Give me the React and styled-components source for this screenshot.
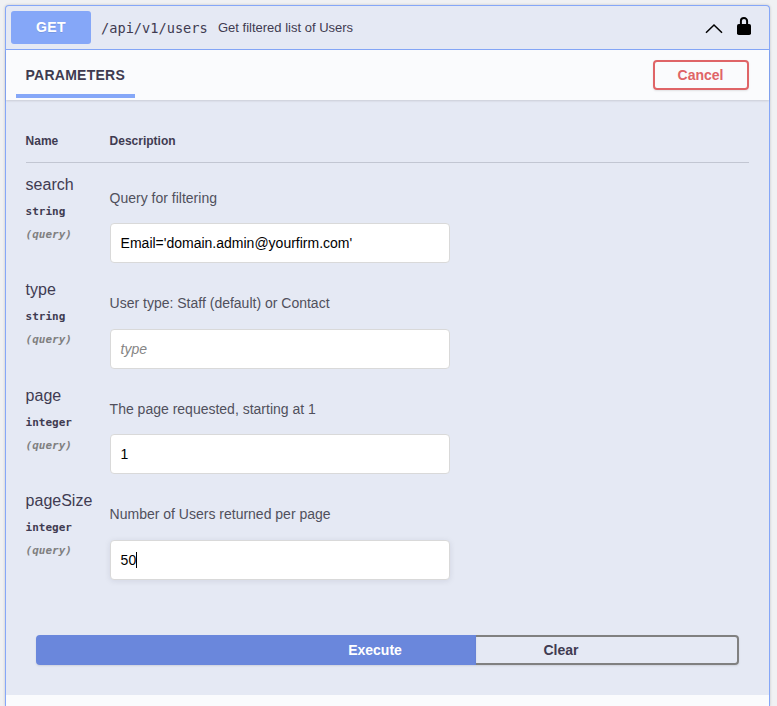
import React from "react";
import styled, { createGlobalStyle } from "styled-components";

const GlobalStyle = createGlobalStyle`
  *, *::before, *::after { box-sizing: border-box; }
  body {
    margin: 0;
    height: 706px;
    overflow: hidden;
    background: #f0f1f3;
    font-family: "Liberation Sans", Arial, sans-serif;
  }
`;

const text = "#3f3b51";
const mono = `"DejaVu Sans Mono", "Liberation Mono", monospace`;

const Operation = styled.section`
  width: 765px;
  height: 701px;
  margin: 5px 0 0 5px;
  border: 1px solid #85a7f8;
  border-bottom: 0;
  border-radius: 4px 4px 0 0;
  background: #e5e9f4;
  box-shadow: 0 0 3px rgba(0, 0, 0, 0.19);
  color: ${text};
`;

const Summary = styled.header`
  display: flex;
  align-items: center;
  height: 44px;
  padding: 0 17px 0 5px;
  border-bottom: 1px solid #85a7f8;
`;

const Method = styled.span`
  width: 80px;
  height: 33px;
  border-radius: 3px;
  background: #85a7f8;
  color: #fff;
  font-size: 14px;
  font-weight: 700;
  letter-spacing: 0.4px;
  line-height: 32px;
  text-align: center;
  text-shadow: 0 1px 0 rgba(0, 0, 0, 0.1);
`;

const Path = styled.span`
  width: 107px;
  margin-left: 10px;
  font-family: ${mono};
  font-size: 13.65px;
  line-height: 20px;
  white-space: nowrap;
`;

const SummaryText = styled.span`
  flex: 1;
  margin-left: 10px;
  font-size: 13px;
  line-height: 20px;
`;

const Chevron = styled.svg`
  width: 20px;
  height: 20px;
  margin-right: 12px;
`;

const Lock = styled.svg`
  width: 16px;
  height: 20px;
  margin-bottom: 3px;
`;

const TabBar = styled.div`
  display: flex;
  justify-content: space-between;
  align-items: center;
  height: 50px;
  padding: 0 20px 0 10px;
  background: #fafbfd;
  box-shadow: 0 1px 2px rgba(0, 0, 0, 0.12);
`;

const Tab = styled.h4`
  align-self: flex-start;
  width: 119px;
  height: 48px;
  margin: 0;
  padding-left: 9.5px;
  border-bottom: 4px solid #85a7f8;
  font-size: 14px;
  letter-spacing: 0.25px;
  line-height: 51px;
  white-space: nowrap;
`;

const Button = styled.button`
  height: 30px;
  padding: 0;
  border-style: solid;
  border-width: 2px;
  border-radius: 4px;
  background: transparent;
  box-shadow: 0 1px 2px rgba(0, 0, 0, 0.1);
  font-family: inherit;
  font-size: 14px;
  font-weight: 700;
  line-height: 26px;
`;

const CancelButton = styled(Button)`
  width: 96px;
  padding-right: 1px;
  border-color: #df6467;
  color: #df6467;
`;

const Parameters = styled.div`
  margin: 20px 20px 0 19.6px;
`;

const HeadingRow = styled.div`
  display: grid;
  grid-template-columns: 84px 1fr;
  height: 43px;
  border-bottom: 1px solid #c2c6d2;
  font-size: 12px;
  font-weight: 700;
  line-height: 42px;
`;

const Row = styled.div`
  display: grid;
  grid-template-columns: 84px 1fr;
  height: 105.5px;
`;

const Name = styled.div`
  margin-top: 11.7px;
  font-size: 16px;
  line-height: 20px;
`;

const Type = styled.div`
  margin-top: 8px;
  font-family: ${mono};
  font-size: 11px;
  font-weight: 700;
  line-height: 18px;
`;

const Location = styled(Type)`
  margin-top: 5px;
  color: #808080;
  font-style: italic;
`;

const Description = styled.p`
  margin: 24.7px 0 15.4px;
  color: #50505c;
  font-size: 14px;
  line-height: 20px;
`;

const Field = styled.div`
  display: flex;
  align-items: center;
  width: 340px;
  height: 40px;
  padding-left: 10px;
  border: 1px solid #d9d9d9;
  border-radius: 4px;
  background: #fff;
  box-shadow: ${(p) => (p.$focused ? "0 1px 6px rgba(0, 0, 40, 0.09)" : "none")};
  color: ${(p) => (p.$placeholder ? "#858585" : "#000")};
  font-size: 14px;
  font-style: ${(p) => (p.$placeholder ? "italic" : "normal")};
`;

const Caret = styled.span`
  width: 1px;
  height: 16px;
  background: #000;
`;

const Actions = styled.div`
  display: flex;
  margin: 50px 30px 30px;
`;

const ExecuteButton = styled(Button)`
  width: 440px;
  padding-left: 238px;
  border-color: #6a87dc;
  border-radius: 4px 0 0 4px;
  background: #6a87dc;
  color: #fff;
`;

const ClearButton = styled(Button)`
  width: 263px;
  padding-right: 91px;
  border-color: #808080;
  border-left: 0;
  border-radius: 0 4px 4px 0;
  color: ${text};
`;

const Responses = styled.div`
  height: 11px;
  background: #fafbfd;
`;

const parameters = [
  { name: "search", type: "string", description: "Query for filtering", value: "Email='domain.admin@yourfirm.com'" },
  { name: "type", type: "string", description: "User type: Staff (default) or Contact" },
  { name: "page", type: "integer", description: "The page requested, starting at 1", value: "1" },
  { name: "pageSize", type: "integer", description: "Number of Users returned per page", value: "50", focused: true },
];

export default function App() {
  return (
    <>
      <GlobalStyle />
      <Operation>
        <Summary>
          <Method>GET</Method>
          <Path>/api/v1/users</Path>
          <SummaryText>Get filtered list of Users</SummaryText>
          <Chevron viewBox="0 0 20 20" aria-hidden="true">
            <path d="M2 14.8 10 7l8 7.8" fill="none" stroke="#000" strokeWidth="1.5" />
          </Chevron>
          <Lock viewBox="0 0 16 20" aria-hidden="true">
            <path d="M4.9 9V5.1a3.1 3.1 0 0 1 6.2 0V9" fill="none" stroke="#000" strokeWidth="2" />
            <rect x="1" y="8" width="14" height="11" rx="1.8" />
          </Lock>
        </Summary>
        <TabBar>
          <Tab>PARAMETERS</Tab>
          <CancelButton>Cancel</CancelButton>
        </TabBar>
        <Parameters>
          <HeadingRow>
            <span>Name</span>
            <span>Description</span>
          </HeadingRow>
          {parameters.map((p) => (
            <Row key={p.name}>
              <div>
                <Name>{p.name}</Name>
                <Type>{p.type}</Type>
                <Location>(query)</Location>
              </div>
              <div>
                <Description>{p.description}</Description>
                <Field $focused={p.focused} $placeholder={!p.value}>
                  {p.value || p.name}
                  {p.focused && <Caret />}
                </Field>
              </div>
            </Row>
          ))}
        </Parameters>
        <Actions>
          <ExecuteButton>Execute</ExecuteButton>
          <ClearButton>Clear</ClearButton>
        </Actions>
        <Responses />
      </Operation>
    </>
  );
}
